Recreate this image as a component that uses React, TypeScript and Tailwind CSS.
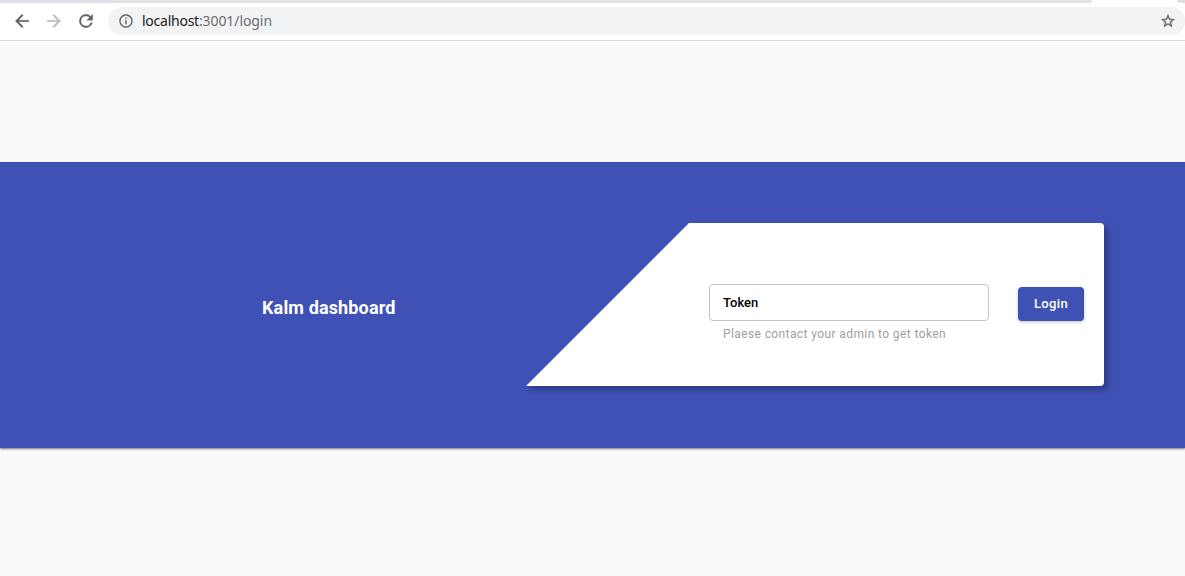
import React from "react";

function NavIcon({ d, color }: { d: string; color: string }) {
  return (
    <svg className="size-5 shrink-0" viewBox="0 0 24 24" fill={color} stroke={color} strokeWidth="0.4" aria-hidden="true">
      <path d={d} />
    </svg>
  );
}

function BrowserBar() {
  return (
    <header className="h-[41px] shrink-0 border-b border-[#d9dadc] bg-white">
      <div className="flex h-[3px] justify-between">
        <div className="w-[1092px] rounded-br-[6px] bg-[#dee1e6]" />
        <div className="w-[8px] rounded-bl-[6px] bg-[#dee1e6]" />
      </div>
      <div className="flex h-9 items-center pl-3">
        <NavIcon color="#5f6368" d="M20 11H7.83l5.59-5.59L12 4l-8 8 8 8 1.41-1.41L7.83 13H20v-2z" />
        <div className="w-3" />
        <NavIcon color="#babcbe" d="M12 4l-1.41 1.41L16.17 11H4v2h12.17l-5.58 5.59L12 20l8-8z" />
        <div className="w-3" />
        <NavIcon
          color="#5f6368"
          d="M17.65 6.35A7.96 7.96 0 0 0 12 4a8 8 0 1 0 7.73 10h-2.08A6 6 0 1 1 12 6c1.66 0 3.14.69 4.22 1.78L13 11h7V4l-2.35 2.35z"
        />
        <div className="ml-3 flex h-7 flex-1 items-center rounded-full bg-[#f1f3f4] pr-[9px] pl-[10px]">
          <svg className="size-4 shrink-0" viewBox="0 0 24 24" fill="#5f6368" stroke="#5f6368" strokeWidth="0.15" aria-hidden="true">
            <path d="M11 17h2v-6h-2v6zm1-15C6.48 2 2 6.48 2 12s4.48 10 10 10 10-4.48 10-10S17.52 2 12 2zm0 18c-4.41 0-8-3.59-8-8s3.59-8 8-8 8 3.59 8 8-3.59 8-8 8zM11 9h2V7h-2v2z" />
          </svg>
          <div className="ml-2 flex-1 font-['Noto_Sans',sans-serif] text-[14px] leading-5 tracking-[-0.16px] text-[#6b6f73]">
            <span className="tracking-[-0.25px] text-[#202124]">localhost</span>
            <span className="tracking-[-0.08px]">:3001/login</span>
          </div>
          <svg className="size-4 shrink-0" viewBox="0 0 24 24" fill="#5f6368" stroke="#5f6368" strokeWidth="0.4" aria-hidden="true">
            <path d="M22 9.24l-7.19-.62L12 2 9.19 8.63 2 9.24l5.46 4.73L5.82 21 12 17.27 18.18 21l-1.63-7.03L22 9.24zM12 15.4l-3.76 2.27 1-4.28-3.32-2.88 4.38-.38L12 6.1l1.71 4.04 4.38.38-3.32 2.88 1 4.28L12 15.4z" />
          </svg>
        </div>
      </div>
    </header>
  );
}

function LoginCard() {
  return (
    <form
      className="relative mt-[61px] mr-[81px] flex h-[163px] w-[578px] items-start rounded-r-[4px] bg-white pt-[61px] pl-[183px] shadow-[4px_4px_5px_0px_rgba(0,0,0,0.26)]"
      onSubmit={(e) => e.preventDefault()}
    >
      <svg className="absolute -top-px -left-px h-[165px] w-[165px]" viewBox="-1 -1 165 165" aria-hidden="true">
        <path d="M-1 -1H164L0 163H-1Z" fill="#3f51b5" />
      </svg>
      <div className="w-[280px]">
        <div className="flex h-[37px] items-center rounded-[4px] border border-[#c4c4c4] px-[13px] text-[13px] leading-4 font-medium text-black">
          Token
        </div>
        <p className="mt-1 ml-[14px] text-[12px] leading-[18px] tracking-[0.396px] text-[#a0a0a0]">
          Plaese contact your admin to get token
        </p>
      </div>
      <button
        type="submit"
        className="mt-[3px] ml-[29px] h-[34px] w-[66px] rounded-[4px] bg-[#3f51b5] text-[13px] font-medium tracking-[0.37px] text-white shadow-[0_1px_3px_rgba(0,0,0,0.25)]"
      >
        Login
      </button>
    </form>
  );
}

export default function App() {
  return (
    <div className="flex h-[576px] w-full flex-col bg-[#fafafa] font-['Roboto',sans-serif]">
      <BrowserBar />
      <main className="mt-[121px] flex h-[286px] items-start justify-between bg-[#3f51b5] shadow-[0_1px_2px_rgba(0,0,0,0.55)]">
        <h1 className="mt-[133px] ml-[262px] text-[18px] leading-[26px] font-bold tracking-[0.15px] text-white">
          Kalm dashboard
        </h1>
        <LoginCard />
      </main>
    </div>
  );
}
